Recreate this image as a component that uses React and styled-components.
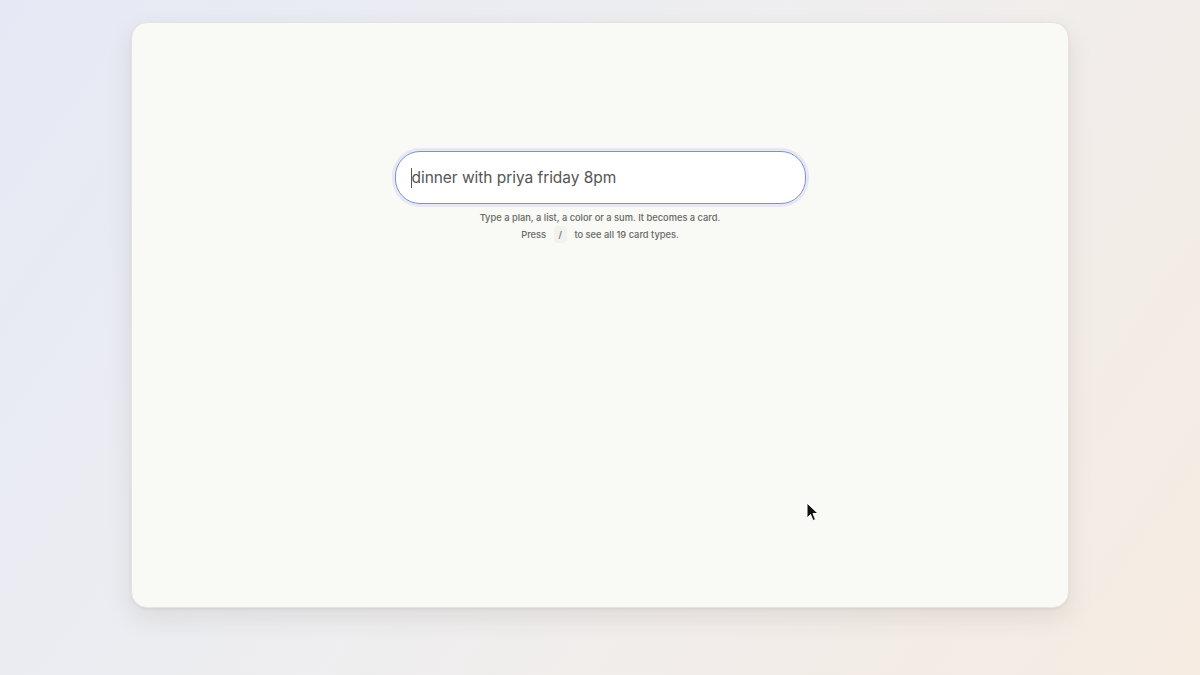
import React from "react";
import styled, { createGlobalStyle } from "styled-components";

const Global = createGlobalStyle`
  html, body { margin: 0; padding: 0; }
  body {
    width: 1200px; height: 675px; overflow: hidden;
    font-family: Inter, "Noto Sans", sans-serif;
    background: linear-gradient(125deg, #e6e9f5 0%, #eeeef0 45%, #f6ece2 100%);
  }
`;

const Stage = styled.div`
  width: 1200px;
  height: 675px;
  box-sizing: border-box;
  padding: 22px 131px 0 131px;
  position: relative;
`;

const Card = styled.div`
  height: 586px;
  box-sizing: border-box;
  background: #f9f9f6;
  border-radius: 16px;
  border: 1px solid #e4e4e0;
  box-shadow: 0 10px 26px rgba(60, 50, 40, 0.1), 0 1px 3px rgba(0,0,0,0.06);
  display: flex;
  flex-direction: column;
  align-items: center;
  padding-top: 128px;
`;

const Input = styled.div`
  width: 411px;
  height: 53px;
  box-sizing: border-box;
  border-radius: 25px;
  border: 1px solid #7f8fd4;
  background: #ffffff;
  box-shadow: 0 0 0 3px rgba(130, 145, 220, 0.14);
  display: flex;
  align-items: center;
  padding-left: 15px;
  font-size: 15.5px;
  color: #555553;
  letter-spacing: -0.05px;
`;

const Caret = styled.span`
  display: inline-block;
  width: 1px;
  height: 20px;
  background: #555;
`;

const Hint = styled.div`
  margin-top: 5px;
  font-size: 9.3px;
  font-weight: 500;
  color: #686865;
  line-height: 17px;
  text-align: center;
`;

const Kbd = styled.span`
  display: inline-block;
  padding: 0 5px;
  margin: 0 5px;
  border-radius: 4px;
  background: #f1f1ee;
  color: #6d6d6a;
`;

const Pointer = styled.svg`
  position: absolute;
  left: 806px;
  top: 502px;
`;

export default function App() {
  return (
    <>
      <Global />
      <Stage>
        <Card>
          <Input>
            <Caret />
            dinner with priya friday 8pm
          </Input>
          <Hint>
            Type a plan, a list, a color or a sum. It becomes a card.
            <br />
            Press <Kbd>/</Kbd> to see all 19 card types.
          </Hint>
        </Card>
        <Pointer width="14" height="20" viewBox="0 0 14 20">
          <path d="M1 1 L1 16 L4.5 12.5 L7 18.5 L9.5 17.5 L7 11.5 L12 11.5 Z" fill="#111" stroke="#fff" strokeWidth="1" strokeLinejoin="round" />
        </Pointer>
      </Stage>
    </>
  );
}
